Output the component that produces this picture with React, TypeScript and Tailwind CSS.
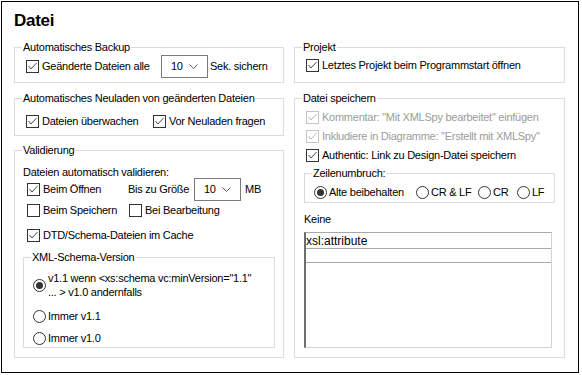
import { ReactNode } from "react"

const GroupBox = ({ label, className, children }: { label: string; className: string; children?: ReactNode }) => (
    <div className={`relative border border-[#dcdcdc] ${className}`}>
        <span className="absolute -top-[7px] left-[7px] bg-white px-[1px] leading-[13px]">{label}</span>
        {children}
    </div>
)

const Box = ({ checked, disabled }: { checked?: boolean; disabled?: boolean }) => (
    <span className={`flex h-[13px] w-[13px] shrink-0 items-center justify-center border bg-white ${disabled ? "border-[#c4c4c4]" : "border-[#333333]"}`}>
        {checked && (
            <svg width="11" height="11" viewBox="0 0 11 11">
                <polyline points="1.5,5 4,8 9.5,2" fill="none" stroke={disabled ? "#b4b4b4" : "#4a4a4a"} strokeWidth="1" />
            </svg>
        )}
    </span>
)

const Check = ({ label, checked, disabled, className = "" }: { label: string; checked?: boolean; disabled?: boolean; className?: string }) => (
    <div className={`flex h-[14px] items-center gap-[3px] ${disabled ? "text-[#9b9b9b]" : ""} ${className}`}>
        <Box checked={checked} disabled={disabled} />
        <span className="leading-[13px] whitespace-nowrap">{label}</span>
    </div>
)

const Dot = ({ on }: { on?: boolean }) => (
    <span className="flex h-[13px] w-[13px] shrink-0 items-center justify-center rounded-full border border-[#333333] bg-white">
        {on && <span className="h-[7px] w-[7px] rounded-full bg-[#333333]" />}
    </span>
)

const Radio = ({ label, on, className = "" }: { label: ReactNode; on?: boolean; className?: string }) => (
    <div className={`flex items-center gap-[2px] ${className}`}>
        <Dot on={on} />
        <span className="leading-[14px] whitespace-nowrap">{label}</span>
    </div>
)

const Combo = () => (
    <div className="flex h-[23px] w-[47px] shrink-0 items-center border border-[#7a7a7a] bg-white pl-[9px] pr-[9px]">
        <span className="leading-[13px]">10</span>
        <svg className="ml-auto" width="9" height="5" viewBox="0 0 9 5">
            <polyline points="0.5,0.5 4.5,4.5 8.5,0.5" fill="none" stroke="#606060" strokeWidth="1" />
        </svg>
    </div>
)

const App = () => {
    return (
        <div className="h-[375px] w-[582px] bg-white pl-[1px] pt-[1px] font-['Liberation_Sans',Arial,sans-serif] text-[11px] leading-[13px] tracking-[-0.25px] text-black">
            <div className="h-[372px] w-[578px] border border-black pl-[12px]">
                <h1 className="mt-[9px] text-[17px] font-bold leading-[20px] tracking-[-0.3px]">Datei</h1>

                <div className="mt-[16px] flex gap-[10px]">
                    {/* left column */}
                    <div className="flex w-[270px] flex-col">
                        <GroupBox label="Automatisches Backup" className="h-[36px] pl-[11px] pt-[7px]">
                            <div className="flex h-[23px] items-center">
                                <Check label="Geänderte Dateien alle" checked className="w-[135px]" />
                                <Combo />
                                <span className="ml-[2px]">Sek. sichern</span>
                            </div>
                        </GroupBox>

                        <GroupBox label="Automatisches Neuladen von geänderten Dateien" className="mt-[15px] h-[38px] pl-[11px] pt-[15px]">
                            <div className="flex">
                                <Check label="Dateien überwachen" checked className="w-[127px]" />
                                <Check label="Vor Neuladen fragen" checked />
                            </div>
                        </GroupBox>

                        <GroupBox label="Validierung" className="mt-[14px] h-[208px] px-[8px] pt-[15px]">
                            <p className="h-[12px] leading-[13px]">Dateien automatisch validieren:</p>
                            <div className="ml-[4px] flex h-[23px] items-center">
                                <Check label="Beim Öffnen" checked className="w-[101px]" />
                                <span className="w-[66px]">Bis zu Größe</span>
                                <Combo />
                                <span className="ml-[4px]">MB</span>
                            </div>
                            <div className="ml-[4px] mt-[2px] flex">
                                <Check label="Beim Speichern" className="w-[102px]" />
                                <Check label="Bei Bearbeitung" />
                            </div>
                            <Check label="DTD/Schema-Dateien im Cache" checked className="ml-[4px] mt-[11px]" />

                            <GroupBox label="XML-Schema-Version" className="mt-[15px] h-[91px] pl-[9px] pt-[13px]">
                                <Radio
                                    on
                                    className="h-[28px]"
                                    label={
                                        <>
                                            v1.1 wenn &lt;xs:schema vc:minVersion="1.1"
                                            <br />
                                            ... &gt; v1.0 andernfalls
                                        </>
                                    }
                                />
                                <Radio label="Immer v1.1" className="mt-[10px] h-[14px]" />
                                <Radio label="Immer v1.0" className="mt-[8px] h-[14px]" />
                            </GroupBox>
                        </GroupBox>
                    </div>

                    {/* right column */}
                    <div className="flex w-[271px] flex-col">
                        <GroupBox label="Projekt" className="h-[36px] pl-[11px] pt-[10px]">
                            <Check label="Letztes Projekt beim Programmstart öffnen" checked />
                        </GroupBox>

                        <GroupBox label="Datei speichern" className="mt-[15px] h-[260px] px-[9px] pt-[11px]">
                            <div className="ml-[2px] flex flex-col gap-[5px]">
                                <Check label={'Kommentar: "Mit XMLSpy bearbeitet" einfügen'} checked disabled />
                                <Check label={'Inkludiere in Diagramme: "Erstellt mit XMLSpy"'} checked disabled />
                                <Check label="Authentic: Link zu Design-Datei speichern" checked />
                            </div>

                            <GroupBox label="Zeilenumbruch:" className="mt-[11px] h-[30px] pl-[9px] pt-[11px]">
                                <div className="flex h-[14px] items-center">
                                    <Radio label="Alte beibehalten" on className="w-[102px]" />
                                    <Radio label="CR &amp; LF" className="w-[62px]" />
                                    <Radio label="CR" className="w-[39px]" />
                                    <Radio label="LF" />
                                </div>
                            </GroupBox>

                            <p className="mt-[10px] h-[13px]">Keine</p>

                            <div className="mr-[3px] mt-[6px] h-[116px] border border-[#d4d4d4] border-l-2 border-t-[#a8a8a8] border-l-[#6e6e6e] bg-white">
                                <div className="h-[16px] border-b border-[#a8a8a8] text-[12px] leading-[16px] tracking-normal">xsl:attribute</div>
                                <div className="h-[14px] border-b border-[#a8a8a8]" />
                            </div>
                        </GroupBox>
                    </div>
                </div>
            </div>
        </div>
    )
}

export default App
